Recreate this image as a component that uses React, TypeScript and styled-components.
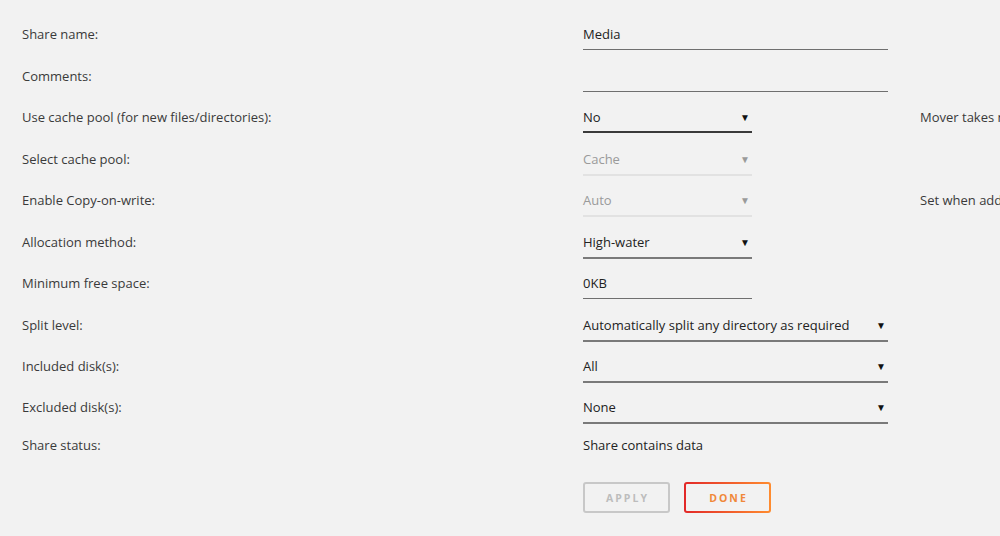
import React from "react";
import styled, { createGlobalStyle } from "styled-components";

const GlobalStyle = createGlobalStyle`
  html, body {
    margin: 0;
    padding: 0;
    background: #f2f2f2;
    overflow: hidden;
  }
  body {
    font-family: "Open Sans", "Noto Sans", Arial, sans-serif;
    font-size: 13px;
    color: #3a3a3a;
  }
`;

const Page = styled.div`
  width: 1000px;
  height: 536px;
  padding: 19px 0 0 22px;
  box-sizing: border-box;
  overflow: hidden;
`;

const Row = styled.div<{ $height?: number }>`
  display: grid;
  grid-template-columns: 561px 305px 32px max-content;
  height: ${(p) => p.$height ?? 41.5}px;
  white-space: nowrap;
`;

const Label = styled.div`
  line-height: 30px;
  height: 30px;
  color: #3a3a3a;
`;

const Note = styled.div`
  grid-column: 4;
  line-height: 30px;
  height: 30px;
  color: #3a3a3a;
`;

const TextInput = styled.div<{ $short?: boolean }>`
  width: ${(p) => (p.$short ? 169 : 305)}px;
  height: 30px;
  line-height: 30px;
  border-bottom: 1px solid #6f6f6f;
  color: #222;
`;

const Select = styled.div<{ $short?: boolean; $disabled?: boolean; $focus?: boolean }>`
  display: flex;
  justify-content: space-between;
  align-items: center;
  width: ${(p) => (p.$short ? 169 : 305)}px;
  height: ${(p) => (p.$focus ? 29 : 30)}px;
  border-bottom: ${(p) =>
    p.$focus
      ? "2px solid #3a3a3a"
      : p.$disabled
      ? "2px solid #e2e2e2"
      : "2px solid #7a7a7a"};
  color: ${(p) => (p.$disabled ? "#9a9a9a" : "#222")};
`;

const Arrow = styled.span<{ $disabled?: boolean }>`
  font-size: 10px;
  padding-right: 2px;
  color: ${(p) => (p.$disabled ? "#9a9a9a" : "#111")};
`;

const Plain = styled.div`
  line-height: 30px;
  height: 30px;
  color: #222;
`;

const Buttons = styled.div`
  display: flex;
  gap: 14px;
  margin-left: 561px;
  margin-top: 22px;
`;

const Button = styled.button<{ $primary?: boolean }>`
  width: 87px;
  height: 31px;
  box-sizing: border-box;
  border-radius: 3px;
  font-family: "Open Sans", "Noto Sans", Arial, sans-serif;
  font-size: 10.5px;
  font-weight: 700;
  letter-spacing: 2px;
  padding: 0 0 0 2px;
  cursor: pointer;
  border: 2px solid ${(p) => (p.$primary ? "transparent" : "#c8c8c8")};
  color: ${(p) => (p.$primary ? "#f0883a" : "#bdbdbd")};
  background: ${(p) =>
    p.$primary
      ? "linear-gradient(#f2f2f2, #f2f2f2) padding-box, linear-gradient(90deg, #e22828, #ff8c2f) border-box"
      : "transparent"};
`;

const SelectField = ({
  value,
  short,
  disabled,
  focus,
}: {
  value: string;
  short?: boolean;
  disabled?: boolean;
  focus?: boolean;
}) => (
  <Select $short={short} $disabled={disabled} $focus={focus}>
    <span>{value}</span>
    <Arrow $disabled={disabled}>▼</Arrow>
  </Select>
);

const App: React.FC = () => {
  return (
    <>
      <GlobalStyle />
      <Page>
        <Row>
          <Label>Share name:</Label>
          <TextInput>Media</TextInput>
        </Row>
        <Row>
          <Label>Comments:</Label>
          <TextInput />
        </Row>
        <Row>
          <Label>Use cache pool (for new files/directories):</Label>
          <SelectField value="No" short focus />
          <Note>Mover takes no action on this share</Note>
        </Row>
        <Row>
          <Label>Select cache pool:</Label>
          <SelectField value="Cache" short disabled />
        </Row>
        <Row>
          <Label>Enable Copy-on-write:</Label>
          <SelectField value="Auto" short disabled />
          <Note>Set when adding new share only</Note>
        </Row>
        <Row>
          <Label>Allocation method:</Label>
          <SelectField value="High-water" short />
        </Row>
        <Row>
          <Label>Minimum free space:</Label>
          <TextInput $short>0KB</TextInput>
        </Row>
        <Row>
          <Label>Split level:</Label>
          <SelectField value="Automatically split any directory as required" />
        </Row>
        <Row $height={41}>
          <Label>Included disk(s):</Label>
          <SelectField value="All" />
        </Row>
        <Row $height={38}>
          <Label>Excluded disk(s):</Label>
          <SelectField value="None" />
        </Row>
        <Row $height={30}>
          <Label>Share status:</Label>
          <Plain>Share contains data</Plain>
        </Row>
        <Buttons>
          <Button>APPLY</Button>
          <Button $primary>DONE</Button>
        </Buttons>
      </Page>
    </>
  );
};

export default App;
